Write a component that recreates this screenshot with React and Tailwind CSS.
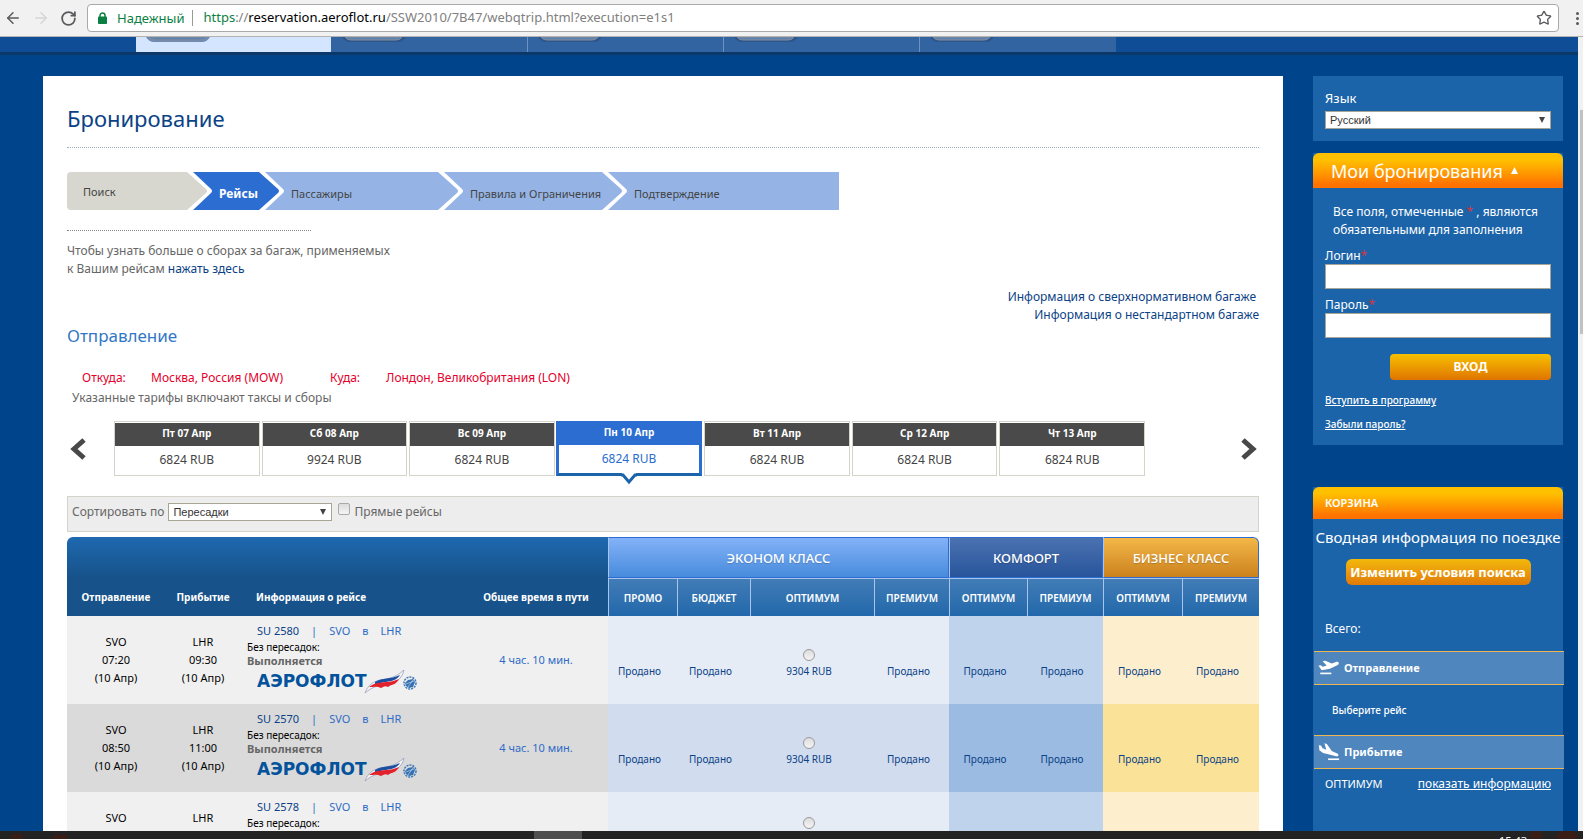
import React, { useState } from 'react'
import { ArrowLeft, ArrowRight, RotateCw, Star } from 'lucide-react'

const steps = [
  { label: 'Поиск', box: 'w-[120px] pl-4 pb-1 bg-[#d7d7cf] rounded-l text-[#444]', fill: '#d7d7cf', next: '#2b6dd0' },
  { label: 'Рейсы', box: 'w-[46px] pl-1.5 bg-[#2b6dd0] text-[12px] text-white font-bold', fill: '#2b6dd0', next: '#95b4e5' },
  { label: 'Пассажиры', box: 'w-[153px] pl-1.5 bg-[#95b4e5] text-[#444]', fill: '#95b4e5', next: '#95b4e5' },
  { label: 'Правила и Ограничения', box: 'w-[138px] pl-1.5 bg-[#95b4e5] text-[#444]', fill: '#95b4e5', next: '#95b4e5' },
  { label: 'Подтверждение', box: 'w-[211px] pl-1.5 bg-[#95b4e5] text-[#444]' }
]

const days = [
  { date: 'Пт 07 Апр', price: '6824 RUB' },
  { date: 'Сб 08 Апр', price: '9924 RUB' },
  { date: 'Вс 09 Апр', price: '6824 RUB' },
  { date: 'Пн 10 Апр', price: '6824 RUB' },
  { date: 'Вт 11 Апр', price: '6824 RUB' },
  { date: 'Ср 12 Апр', price: '6824 RUB' },
  { date: 'Чт 13 Апр', price: '6824 RUB' }
]

const flights = [
  { number: 'SU 2580', departure: '07:20', arrival: '09:30' },
  { number: 'SU 2570', departure: '08:50', arrival: '11:00' },
  { number: 'SU 2578', departure: '', arrival: '', tall: true }
]

const fares = [
  { label: 'ПРОМО', group: 'economy' },
  { label: 'БЮДЖЕТ', group: 'economy' },
  { label: 'ОПТИМУМ', group: 'economy', price: '9304 RUB' },
  { label: 'ПРЕМИУМ', group: 'economy' },
  { label: 'ОПТИМУМ', group: 'comfort' },
  { label: 'ПРЕМИУМ', group: 'comfort' },
  { label: 'ОПТИМУМ', group: 'business' },
  { label: 'ПРЕМИУМ', group: 'business' }
]

const fareColors = {
  economy: ['bg-[#e5ecf6]', 'bg-[#d1dcee]'],
  comfort: ['bg-[#bfd3ec]', 'bg-[#9cbbe2]'],
  business: ['bg-[#fdefce]', 'bg-[#fae299]']
}

function BrowserBar() {
  return (
    <header className="flex h-[37px] shrink-0 items-center border-b border-[#b3b3b3] bg-[#f1f1f1] pl-1 text-[#5a5a5e]">
      <button aria-label="Назад" className="w-7"><ArrowLeft className="h-[18px] w-[18px]" /></button>
      <button aria-label="Вперёд" className="w-7 text-[#d5d5d5]"><ArrowRight className="h-[18px] w-[18px]" /></button>
      <button aria-label="Обновить" className="w-[27px]"><RotateCw className="h-[17px] w-[17px]" strokeWidth={2.5} /></button>
      <div className="flex h-7 flex-1 items-center rounded-sm border border-[#a9a9a9] bg-white pl-2.5 pr-1.5 text-[13px]">
        <svg width="9" height="12" viewBox="0 0 9 12">
          <path d="M2 5V3.500a2.500 2.500 0 0 1 5 0V5" fill="none" stroke="#0b8043" strokeWidth="1.500" />
          <rect y="4.500" width="9" height="7.500" rx=".8" fill="#0b8043" />
        </svg>
        <span className="ml-2.5 border-r border-[#999] pr-2 leading-4 text-[#0b8043]">Надежный</span>
        <span className="ml-2.5 flex-1 text-[#808080]">
          <span className="text-[#0b8043]">https</span>://<span className="text-black">reservation.aeroflot.ru</span>/SSW2010/7B47/webqtrip.html?execution=e1s1
        </span>
        <Star className="h-4 w-4" />
      </div>
      <button aria-label="Меню" className="flex w-6 flex-col items-end gap-0.5 pr-1">
        <span className="h-[3px] w-[3px] rounded-full bg-[#5a5a5e]" />
        <span className="h-[3px] w-[3px] rounded-full bg-[#5a5a5e]" />
        <span className="h-[3px] w-[3px] rounded-full bg-[#5a5a5e]" />
      </button>
    </header>
  )
}

function TopTabs() {
  return (
    <nav className="flex h-[18px] border-b-3 border-[#0b3869] bg-[#0f4e96] pl-[136px]">
      {[0, 1, 2, 3, 4].map((i) => (
        <a
          key={i}
          href="#"
          aria-label={`Раздел ${i + 1}`}
          className={`w-[196px] border-r pl-[9px] ${i === 0 ? 'border-[#3164a3] bg-[#d3e5ff]' : 'border-[#6d92c0] bg-[#3164a1] last:border-[#3164a1]'}`}
        >
          <svg width="66" height="6" viewBox="0 0 66 6">
            <path d="M1 0h64q-3 5-8 5H9Q4 5 1 0z" fill="#2c4f80" opacity=".6" />
            <path d="M4 0h57q-2 3-6 3H10Q6 3 4 0z" fill="#5d82ad" stroke="#858b99" strokeWidth="1" />
          </svg>
        </a>
      ))}
    </nav>
  )
}

function Steps() {
  return (
    <ol className="flex h-[38px] text-[11px]">
      {steps.map((step) => (
        <li key={step.label} className="flex">
          <span className={`flex items-center whitespace-nowrap pt-1.5 ${step.box}`}>{step.label}</span>
          {step.next && (
            <svg width="26" height="38" viewBox="0 0 26 38">
              <rect width="26" height="38" fill={step.next} />
              <path d="M0 0h6l18 17q2 2 0 4L6 38H0z" fill="#fff" />
              <path d="M0 0l19 17q2 2 0 4L0 38z" fill={step.fill} />
            </svg>
          )}
        </li>
      ))}
    </ol>
  )
}

function Chevron({ flip }) {
  return (
    <svg width="16" height="22" viewBox="0 0 16 22" className={flip ? 'rotate-180' : ''}>
      <path d="M14 2L4 11l10 9" fill="none" stroke="#484848" strokeWidth="5" />
    </svg>
  )
}

function DayPicker() {
  const [active, setActive] = useState(3)
  return (
    <div className="mt-[13px] flex items-center pl-[3px] pr-0.5">
      <button aria-label="Предыдущие дни" className="w-11"><Chevron /></button>
      <div className="grid flex-1 grid-cols-7 gap-0.5">
        {days.map((day, i) => {
          const isActive = i === active
          return (
            <button
              key={day.date}
              onClick={() => setActive(i)}
              className={`relative h-[55px] text-center text-[12px] ${
                isActive
                  ? '-ml-px border-x-3 border-t border-b-3 border-[#2b6dd0] border-b-[#1b64a9] text-[#2b6dd0]'
                  : 'border border-[#d4d4ca] text-[#444]'
              }`}
            >
              <span className={`block h-[23px] text-[10px] font-bold leading-5 text-white ${isActive ? 'bg-[#2b6dd0]' : 'bg-[#4a4a4a]'}`}>{day.date}</span>
              <span className="block leading-7">{day.price}</span>
              {isActive && (
                <svg className="absolute left-1/2 top-[51px] -translate-x-1/2" width="18" height="12" viewBox="0 0 18 12">
                  <path d="M2 0h14v2L9 10 2 2z" fill="#fff" />
                  <path d="M1 2h2l6 7 6-7h2" fill="none" stroke="#1b64a9" strokeWidth="3" />
                </svg>
              )}
            </button>
          )
        })}
      </div>
      <button aria-label="Следующие дни" className="flex w-28 justify-end"><Chevron flip /></button>
    </div>
  )
}

function AirlineLogo() {
  return (
    <svg width="162" height="24" viewBox="0 0 162 24" className="ml-2.5 mt-0.5" role="img" aria-label="Аэрофлот">
      <text x="0" y="17" fill="#02529c" fontSize="17" fontWeight="bold" fontFamily="'DejaVu Sans', sans-serif">АЭРОФЛОТ</text>
      <path d="M108 23c4-11 12-13 22-14 8-2 12-5 17-9-2 9-8 13-16 14-9 1-16 3-23 9z" fill="#f2f4f8" stroke="#8f9ab2" strokeWidth=".7" />
      <path d="M118 12c8-5 14-2 25-7-3 5-8 6-14 7-5 1-7 1-11 3z" fill="#1c4fa0" />
      <path d="M112 17c6-5 12-4 17-5 5 0 8-1 13-3-3 6-7 5-11 8-3-2-5 0-7 1-4-2-6-1-12-1z" fill="#e3212b" />
      <circle cx="153" cy="13" r="6" fill="none" stroke="#3f78b8" strokeWidth="1.5" strokeDasharray="2 1" />
      <path d="M148 13l3-3 5-1 2 3-2 5-4 1-3-2z" fill="#3470b3" />
      <path d="M149 14l8-3M151 17l5-7" stroke="#d7e3f0" strokeWidth=".6" />
    </svg>
  )
}

function FlightRow({ flight, index }) {
  const odd = index % 2
  return (
    <tr className={`h-[88px] text-[11px] ${odd ? 'bg-[#dadada]' : 'bg-[#f0f0f0]'}`}>
      <td className="text-center leading-[18px] text-black">SVO<br />{flight.departure || <>&nbsp;</>}<br />{flight.departure ? '(10 Апр)' : <>&nbsp;</>}</td>
      <td className="text-center leading-[18px] text-black">LHR<br />{flight.arrival || <>&nbsp;</>}<br />{flight.arrival ? '(10 Апр)' : <>&nbsp;</>}</td>
      <td className="pl-1.5 align-top">
        <div className="flex gap-3 pl-2.5 pt-1.5 leading-[18px] text-[#2f6bc6]">
          <a href="#" className="text-[#0b4286]">{flight.number}</a>
          <span>|</span>
          <span>SVO</span>
          <span>в</span>
          <span>LHR</span>
        </div>
        <div className="text-[10px] leading-[14px] text-black">Без пересадок:</div>
        {!flight.tall && (
          <>
            <div className="text-[11px] font-bold leading-[14px] text-[#666]">Выполняется</div>
            <AirlineLogo />
          </>
        )}
      </td>
      <td className="text-center text-[#2f6bc6]">{!flight.tall && '4 час. 10 мин.'}</td>
      {fares.map((fare, i) => (
        <td key={i} className={`pr-1.5 text-center text-[10px] leading-4 text-[#0b4286] ${fareColors[fare.group][odd]}`}>
          {fare.price ? (
            <label className={`flex flex-col items-center ${flight.tall ? 'pb-6' : 'pt-2'}`}>
              <input
                type="radio"
                name="fare"
                aria-label={fare.price}
                className="mb-0.5 h-3 w-3 appearance-none rounded-full border border-[#999] bg-linear-to-b from-[#ddd] to-[#f4f4f4] checked:bg-[#2b6dd0]"
              />
              {!flight.tall && fare.price}
            </label>
          ) : (
            <div className="pt-[22px]">{flight.tall ? '' : 'Продано'}</div>
          )}
        </td>
      ))}
    </tr>
  )
}

function FlightTable() {
  const groupClass = 'border border-[#2b6dd0] border-l-[#a9c4ee] text-[13px] font-medium text-shadow-xs'
  return (
    <table className="mt-[5px] w-full table-fixed border-separate border-spacing-0">
      <colgroup>
        <col className="w-[98px]" />
        <col className="w-[76px]" />
        <col className="w-[223px]" />
        <col className="w-[144px]" />
        <col className="w-[69px]" />
        <col className="w-[73px]" />
        <col className="w-[124px]" />
        <col className="w-[75px]" />
        <col className="w-[78px]" />
        <col className="w-[76px]" />
        <col className="w-[79px]" />
        <col />
      </colgroup>
      <thead className="text-white">
        <tr className="h-[41px]">
          <th colSpan={4} className="rounded-tl-md bg-linear-to-b from-[#1e69b0] to-[#17528a]" />
          <th colSpan={4} className={`bg-linear-to-b from-[#83b2f8] to-[#468bdc] ${groupClass}`}>ЭКОНОМ КЛАСС</th>
          <th colSpan={2} className={`bg-linear-to-b from-[#4b72b1] to-[#27549b] ${groupClass}`}>КОМФОРТ</th>
          <th colSpan={2} className={`rounded-tr-md bg-linear-to-b from-[#f3b847] to-[#cb811c] ${groupClass}`}>БИЗНЕС КЛАСС</th>
        </tr>
        <tr className="h-[38px] text-[10px]">
          <th className="bg-[#17528a]">Отправление</th>
          <th className="bg-[#17528a]">Прибытие</th>
          <th className="bg-[#17528a] pl-[15px] text-left">Информация о рейсе</th>
          <th className="bg-[#17528a]">Общее время в пути</th>
          {fares.map((fare, i) => (
            <th key={i} className="border-l border-t border-[#a9c4ee] bg-linear-to-b from-[#417cb6] to-[#2168ab] font-semibold">{fare.label}</th>
          ))}
        </tr>
      </thead>
      <tbody>
        {flights.map((flight, i) => (
          <FlightRow key={flight.number} flight={flight} index={i} />
        ))}
      </tbody>
    </table>
  )
}

function SelectBox({ id, value, className }) {
  return (
    <div className={`relative ${className}`}>
      <select id={id} className="block h-[18px] w-full appearance-none border border-[#a9a595] bg-white pl-1 font-['Liberation_Sans',sans-serif] text-[11px] leading-4 text-[#333]">
        <option>{value}</option>
      </select>
      <svg className="pointer-events-none absolute right-1.5 top-1.5" width="6" height="6" viewBox="0 0 6 6">
        <path d="M0 0h6L3 6z" fill="#444" />
      </svg>
    </div>
  )
}

function Booking() {
  return (
    <main className="min-w-0 flex-1 bg-white px-6 pt-6 text-[12px] leading-[18px] text-[#666]">
      <h1 className="text-[22px] leading-9 text-[#0b4286]">Бронирование</h1>
      <div className="mb-6 mt-[11px] border-t border-dotted border-[#9ab0c0]" />
      <Steps />
      <div className="mt-5 w-[244px] border-t border-dotted border-[#888]" />
      <p className="mt-[11px] w-[330px]">
        Чтобы узнать больше о сборах за багаж, применяемых<br />
        к Вашим рейсам <a href="#" className="text-[#0b4286]">нажать здесь</a>
      </p>
      <div className="mt-2.5 flex flex-col items-end text-[#0b4286]">
        <a href="#" className="pr-[3px]">Информация о сверхнормативном багаже</a>
        <a href="#">Информация о нестандартном багаже</a>
      </div>
      <h2 className="text-[17px] leading-6 text-[#3277c6]">Отправление</h2>
      <div className="mt-5 flex pl-[15px] leading-5 text-[#e4002b]">
        <span className="w-[69px]">Откуда:</span>
        <span className="w-[179px]">Москва, Россия (MOW)</span>
        <span className="w-14">Куда:</span>
        <span>Лондон, Великобритания (LON)</span>
      </div>
      <p className="pl-[5px] leading-5">Указанные тарифы включают таксы и сборы</p>
      <DayPicker />
      <div className="mt-5 flex h-9 items-start border border-[#d4d4ca] bg-[#ededed] px-1 pt-1.5">
        <label htmlFor="sort">Сортировать по</label>
        <SelectBox id="sort" value="Пересадки" className="ml-1 w-[164px]" />
        <input id="direct" type="checkbox" className="ml-1.5 h-3 w-3 appearance-none rounded-xs border border-[#aaa] bg-linear-to-b from-[#ddd] to-[#f4f4f4] checked:bg-[#2b6dd0]" />
        <label htmlFor="direct" className="ml-1">Прямые рейсы</label>
      </div>
      <FlightTable />
    </main>
  )
}

function Required() {
  return <span className="text-[#d8343c]">*</span>
}

function TakeoffIcon() {
  return (
    <svg width="22" height="22" viewBox="0 0 24 24" fill="#fff">
      <path d="M22.6 6.2c-.3-.9-1.3-1.2-2.2-.9L15 7 8 4l-3 .6 4.5 4.6-4.3 1.5L3 9 .5 9.500 4 14.500l9-1.800 8.500-4c1-.5 1.400-1.500 1.100-2.500z" />
      <path d="M2.500 17h12v1.800h-12z" />
    </svg>
  )
}

function LandingIcon() {
  return (
    <svg width="22" height="22" viewBox="0 0 24 24" fill="#fff">
      <path d="M1 4.500l2.300.5 1.700 3 4 1.500L7 2.500l2.700.9 5.300 7.600 6 2.500c1 .4 1.500 1.300 1.100 2.200-.3.900-1.300 1.200-2.300.9L5.500 13 1.500 10z" />
      <path d="M11 19h12v1.800H11z" />
    </svg>
  )
}

function Sidebar() {
  const inputClass = 'block h-[25px] w-full border border-[#a9a595] bg-white px-1 text-black'
  return (
    <aside className="flex w-[250px] shrink-0 flex-col text-[12px] leading-[18px] text-white">
      <section className="h-[65px] bg-[#1c64a9] px-3 pt-3">
        <label htmlFor="language" className="block text-[13px] leading-5">Язык</label>
        <SelectBox id="language" value="Русский" className="mt-[3px]" />
      </section>

      <section className="mt-3 bg-[#1c64a9]">
        <h2 className="flex h-[35px] items-center gap-2 rounded-t-md bg-linear-to-b from-[#ffc000] from-20% to-[#ff7200] to-90% pl-[18px] text-[18px]">
          Мои бронирования
          <svg width="7" height="7" viewBox="0 0 7 7"><path d="M3.5 0L7 7H0z" fill="#fff" /></svg>
        </h2>
        <form className="px-3 pb-3 pt-[15px]" onSubmit={(e) => e.preventDefault()}>
          <p className="pl-2">Все поля, отмеченные <Required /> , являются обязательными для заполнения</p>
          <label htmlFor="login" className="mt-2 block leading-[17px]">Логин<Required /></label>
          <input id="login" type="text" className={inputClass} />
          <label htmlFor="password" className="mt-[7px] block leading-[17px]">Пароль<Required /></label>
          <input id="password" type="password" className={inputClass} />
          <button className="ml-auto mt-4 block h-[26px] w-[161px] rounded-sm bg-linear-to-b from-[#f6c000] to-[#df7400] font-bold">ВХОД</button>
          <a href="#" className="mt-[11px] block text-[10px] font-medium leading-[18px] underline">Вступить в программу</a>
          <a href="#" className="mt-1.5 block text-[10px] font-medium leading-[18px] underline">Забыли пароль?</a>
        </form>
      </section>

      <section className="mt-[42px] flex-1 bg-[#1c64a9]">
        <h2 className="flex h-8 items-center rounded-t-md bg-linear-to-b from-[#ffc000] from-20% to-[#ff7200] to-90% pl-3 text-[11px] font-semibold">КОРЗИНА</h2>
        <p className="whitespace-nowrap pt-2 text-center text-[15px] leading-5">Сводная информация по поездке</p>
        <button className="mx-auto mt-3 block h-[26px] w-[185px] whitespace-nowrap rounded-md bg-linear-to-b from-[#f3b90c] to-[#e07a08] text-[13px] font-bold">Изменить условия поиска</button>
        <p className="mt-[35px] pl-3">Всего:</p>
        <h3 className="-mr-px ml-px mt-[13px] flex h-[34px] items-center gap-1 border-y border-[#f0b450] bg-[#4e86bd] pl-1 text-[11px] font-bold">
          <TakeoffIcon />
          Отправление
        </h3>
        <p className="py-4 pl-[19px] text-[10px] font-medium">Выберите рейс</p>
        <h3 className="-mr-px ml-px flex h-[34px] items-center gap-1 border-y border-[#f0b450] bg-[#4e86bd] pl-1 text-[11px] font-bold">
          <LandingIcon />
          Прибытие
        </h3>
        <div className="flex items-baseline justify-between px-3 pt-1.5">
          <span className="text-[11px]">ОПТИМУМ</span>
          <a href="#" className="underline">показать информацию</a>
        </div>
      </section>
    </aside>
  )
}

function Taskbar() {
  return (
    <footer className="flex h-2 shrink-0 justify-between overflow-hidden bg-[#232323] text-[11px] leading-4 text-white">
      <svg width="80" height="8" viewBox="0 0 80 8">
        <path d="M10 8l3-6 3 3 4-4 3 7zM52 8l4-7 3 4 6-2 4 5z" fill="#3a1d15" />
      </svg>
      <span className="ml-[454px] w-12 bg-[#4f4f4f]" />
      <span className="ml-auto pt-0.5">15:43</span>
      <svg width="56" height="8" viewBox="0 0 56 8">
        <path d="M2 4l4-4h6l5 5-4 3H5zM28 6l6-6h12l6 6-6 2H32z" fill="#3a1d15" />
      </svg>
    </footer>
  )
}

export default function App() {
  return (
    <div className="flex h-screen flex-col overflow-hidden bg-[#00458c] font-['Noto_Sans',sans-serif]">
      <BrowserBar />
      <div className="flex min-h-0 flex-1">
        <div className="flex min-w-0 flex-1 flex-col overflow-hidden">
          <TopTabs />
          <div className="mt-[21px] flex min-h-0 flex-1 gap-[30px] pl-[43px] pr-[15px]">
            <Booking />
            <Sidebar />
          </div>
        </div>
        <div className="w-[5px] bg-[#f1f1f1] pl-0.5 pt-[73px]">
          <div className="h-56 bg-[#c1c1c1]" />
        </div>
      </div>
      <Taskbar />
    </div>
  )
}
